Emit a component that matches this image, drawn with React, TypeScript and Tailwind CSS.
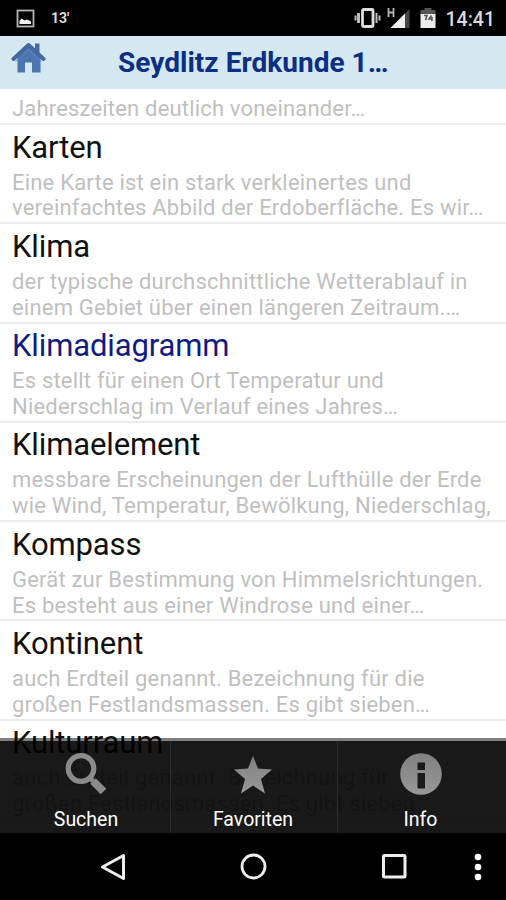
const entries = [
  { title: "Karten", lines: ["Eine Karte ist ein stark verkleinertes und", "vereinfachtes Abbild der Erdoberfläche. Es wir…"] },
  { title: "Klima", lines: ["der typische durchschnittliche Wetterablauf in", "einem Gebiet über einen längeren Zeitraum.…"] },
  { title: "Klimadiagramm", active: true, lines: ["Es stellt für einen Ort Temperatur und", "Niederschlag im Verlauf eines Jahres…"] },
  { title: "Klimaelement", lines: ["messbare Erscheinungen der Lufthülle der Erde", "wie Wind, Temperatur, Bewölkung, Niederschlag,"] },
  { title: "Kompass", lines: ["Gerät zur Bestimmung von Himmelsrichtungen.", "Es besteht aus einer Windrose und einer…"] },
  { title: "Kontinent", lines: ["auch Erdteil genannt. Bezeichnung für die", "großen Festlandsmassen. Es gibt sieben…"] },
  { title: "Kulturraum", lines: ["auch Erdteil genannt. Bezeichnung für", "großen Festlandsmassen. Es gibt sieben"] },
];

function StatusBar() {
  return (
    <div className="flex h-[36px] shrink-0 items-center bg-black text-[#dcdcdc]">
      <svg className="ml-4" width="19" height="19" viewBox="0 0 19 19">
        <rect x="1.5" y="1.5" width="16" height="16" fill="#050505" stroke="#b4b4b4" strokeWidth="1.8" />
        <path d="M3.5 15V12l2-2.5 3 2 2.5-1 4 2v2.5z" fill="#f2f2f2" />
      </svg>
      <span className="ml-4 text-[14px] font-bold">13'</span>
      <svg className="ml-auto" width="28" height="22" viewBox="0 0 28 22">
        <rect x="8.5" y="2.5" width="10.5" height="17" rx="1" fill="none" stroke="#dedede" strokeWidth="2.8" />
        <path d="M1.5 8.5v5M22.5 6v10M25.5 8.5v5" stroke="#bdbdbd" strokeWidth="2" />
        <path d="M4.5 6v10" stroke="#bdbdbd" strokeWidth="3" />
      </svg>
      <svg className="ml-[5px]" width="24" height="22" viewBox="0 0 24 22">
        <path d="M1.5 1v9M6.5 1v9M1.5 5.5h5" stroke="#b4b4b4" strokeWidth="1.8" />
        <path d="M3.5 21 22.5 2v19z" fill="#454545" />
        <path d="M3.5 21 18 6.5V21z" fill="#efefef" />
      </svg>
      <svg className="ml-[9px]" width="16" height="22" viewBox="0 0 16 22">
        <path d="M.5 7V3h4V1h7v2h4v4z" fill="#555" />
        <path d="M.5 7h15v14H.5z" fill="#efefef" />
        <path d="M4 8.5h3L5.500 13M11.5 8.5 9 12h3.500M12 10v4" fill="none" stroke="#555" strokeWidth="1.6" />
      </svg>
      <span className="ml-[10px] mr-[11px] mt-[3px] text-[19.5px] font-medium leading-none">14:41</span>
    </div>
  );
}

function Header() {
  return (
    <header className="flex h-[53px] shrink-0 bg-[#d5e7f1]">
      <svg className="ml-[11px] mt-[5px]" width="35" height="33" viewBox="0 0 35 33">
        <path d="M24 2.5h4.500V14H24z" fill="#4468a0" />
        <path d="M6.5 16 17.5 6 29.5 16v15.5h-8.500V21.500h-7v10H6.500z" fill="#4d76af" />
        <path d="M2.5 18 17.5 4 32.5 18" fill="none" stroke="#4468a0" strokeWidth="4" strokeLinecap="round" strokeLinejoin="round" />
        <path d="M4.5 20.5 17.5 8.5 30.5 20.5" fill="none" stroke="#6188bc" strokeWidth="0.9" />
      </svg>
      <h1 className="ml-[72px] whitespace-nowrap text-[28px] font-bold leading-[53px] tracking-[0.03px] text-[#0b2f83]">
        Seydlitz Erdkunde 1…
      </h1>
    </header>
  );
}

function Entry({ title, lines, active }: { title: string; lines: string[]; active?: boolean }) {
  return (
    <div className="h-[99.3px] shrink-0 whitespace-nowrap border-b-2 border-[#ebebeb] pl-3">
      <div className={`pt-[4.6px] text-[31px] leading-9 tracking-[-0.13px] ${active ? "text-[#101c84]" : "text-[#101010]"}`}>{title}</div>
      <div className="pt-1 text-[22px] leading-[25.8px] tracking-[0.2px] text-[#bfbfbf]">
        {lines.map((line) => (
          <div key={line}>{line}</div>
        ))}
      </div>
    </div>
  );
}

function Menu() {
  const item = "flex flex-col items-center text-[19.5px] text-white";
  return (
    <div className="absolute inset-x-0 bottom-0 grid h-[95px] grid-cols-[171px_167px_168px] border-t-[3px] border-black/50 bg-black/90 bg-clip-padding">
      <svg className="absolute size-0">
        <linearGradient id="metal" x1="0" y1="0" x2="0" y2="1">
          <stop offset="0" stopColor="#808080" />
          <stop offset="1" stopColor="#989898" />
        </linearGradient>
      </svg>
      <div className={`${item} border-r border-[#2b2b2b] pl-[2px]`}>
        <svg className="mt-3" width="42" height="42" viewBox="0 0 42 42">
          <circle cx="16" cy="15.5" r="12.8" fill="none" stroke="#8b8b8b" strokeWidth="5.2" />
          <path d="m25 25 3 3" stroke="#8b8b8b" strokeWidth="5" />
          <path d="m28 28 10.500 10.500" stroke="#8b8b8b" strokeWidth="8" />
        </svg>
        <span className="mt-[13px] leading-6">Suchen</span>
      </div>
      <div className={`${item} border-r border-[#2b2b2b] pr-[2px]`}>
        <svg className="mt-3" width="42" height="42" viewBox="0 0 42 42">
          <path d="m21 3 5 12.5 14 1-11 9.500 4 14.500-12-8-12 8 4-14.500-11-9.500 14-1z" fill="url(#metal)" />
        </svg>
        <span className="mt-[13px] leading-6">Favoriten</span>
      </div>
      <div className={`${item} pr-[3px]`}>
        <svg className="mt-3" width="42" height="42" viewBox="0 0 42 42">
          <circle cx="21" cy="21" r="20.8" fill="url(#metal)" />
          <path d="M17.5 9.500h7.500V17h-7.500zM17.500 20h7.500v15.500h-7.500z" fill="#1a1a1a" />
        </svg>
        <span className="mt-[13px] leading-6">Info</span>
      </div>
    </div>
  );
}

function NavBar() {
  return (
    <div className="flex h-[67px] shrink-0 items-center bg-black">
      <svg className="ml-[99px]" width="27" height="30" viewBox="0 0 27 30">
        <path d="M24.5 3.5v23L3.500 15z" fill="none" stroke="#eee" strokeWidth="3" strokeLinejoin="round" />
      </svg>
      <svg className="ml-[114px]" width="27" height="27" viewBox="0 0 27 27">
        <circle cx="13.5" cy="13.5" r="11.5" fill="none" stroke="#eee" strokeWidth="2.8" />
      </svg>
      <svg className="ml-[115px]" width="25" height="25" viewBox="0 0 25 25">
        <rect x="1.5" y="1.5" width="21.5" height="21.5" rx="1" fill="none" stroke="#eee" strokeWidth="3" />
      </svg>
      <svg className="ml-[67px]" width="8" height="28" viewBox="0 0 8 28" fill="#fff">
        <circle cx="4" cy="4" r="3.3" />
        <circle cx="4" cy="14" r="3.3" />
        <circle cx="4" cy="24" r="3.3" />
      </svg>
    </div>
  );
}

export default function App() {
  return (
    <div className="flex h-[900px] w-[506px] flex-col overflow-hidden bg-white font-['Roboto','Liberation_Sans',sans-serif]">
      <StatusBar />
      <Header />
      <main className="relative flex flex-1 flex-col overflow-hidden">
        <div className="h-[36px] shrink-0 border-b-2 border-[#f0f0f0] pl-3 pt-[7px] text-[22px] leading-[26px] tracking-[0.18px] text-[#bfbfbf]">
          Jahreszeiten deutlich voneinander…
        </div>
        {entries.map((entry) => (
          <Entry key={entry.title} {...entry} />
        ))}
        <Menu />
      </main>
      <NavBar />
    </div>
  );
}
